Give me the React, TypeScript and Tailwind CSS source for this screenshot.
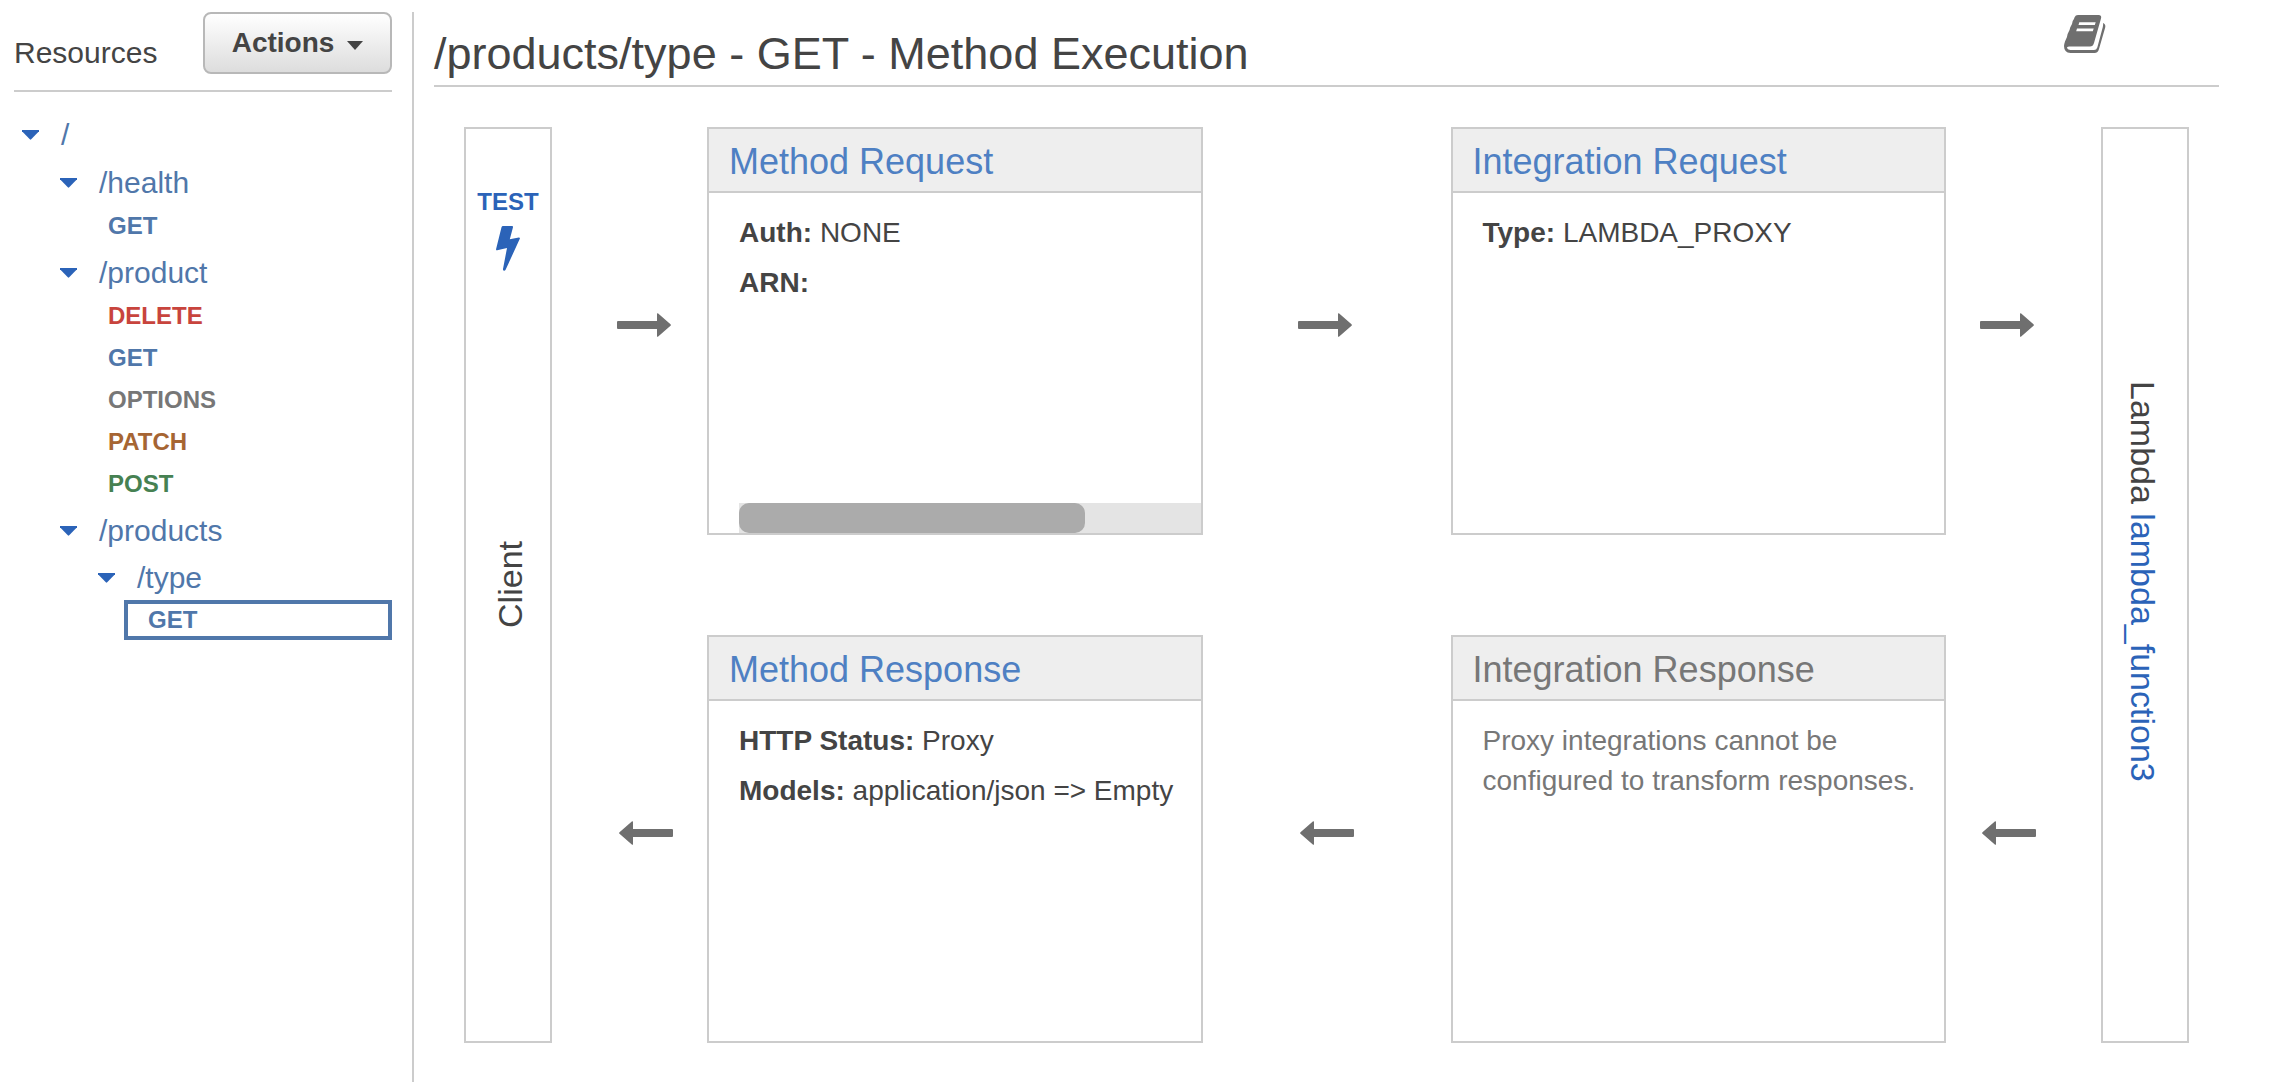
import type { ReactNode } from "react";

function Caret() {
  return (
    <svg viewBox="0 0 17 10" className="h-[10px] w-[17px] shrink-0 fill-[#2b63b8]" aria-hidden="true">
      <path d="M0 0H17V1.2L9.2 9.3Q8.5 10 7.8 9.3L0 1.2Z" />
    </svg>
  );
}

function Resource({ name, children }: { name: string; children?: ReactNode }) {
  return (
    <li>
      <button type="button" className="flex h-[45px] items-center gap-[22px] text-[30px] leading-none text-[#5077aa]">
        <Caret />
        {name}
      </button>
      {children}
    </li>
  );
}

function Methods({ children }: { children: ReactNode }) {
  return <ul className="pl-12">{children}</ul>;
}

function Method({ name, color }: { name: string; color: string }) {
  return (
    <li>
      <a href="#" className={`flex h-[42px] items-center text-2xl leading-none font-bold ${color}`}>
        {name}
      </a>
    </li>
  );
}

function Sidebar() {
  return (
    <aside className="w-[414px] shrink-0 border-r-2 border-[#ccc] pr-5 pl-[14px]">
      <header className="flex h-20 items-start justify-between border-b-2 border-[#ccc]">
        <h2 className="pt-[22px] text-[30px] leading-[38px]">Resources</h2>
        <button
          type="button"
          className="flex h-[62px] w-[189px] items-center justify-center gap-[13px] rounded-lg border-2 border-[#b8b8b8] bg-linear-to-b from-white to-[#dddddd] text-[28px] font-bold"
        >
          Actions
          <svg viewBox="0 0 16 9" className="mt-1 h-[9px] w-4 fill-[#444]" aria-hidden="true">
            <path d="M0 0H16L8 9Z" />
          </svg>
        </button>
      </header>
      <nav aria-label="Resources" className="pt-5 pl-2">
        <ul>
          <Resource name="/">
            <ul className="flex flex-col gap-[3px] pt-[3px] pl-[38px]">
              <Resource name="/health">
                <Methods>
                  <Method name="GET" color="text-[#5077aa]" />
                </Methods>
              </Resource>
              <Resource name="/product">
                <Methods>
                  <Method name="DELETE" color="text-[#c8443d]" />
                  <Method name="GET" color="text-[#5077aa]" />
                  <Method name="OPTIONS" color="text-[#777777]" />
                  <Method name="PATCH" color="text-[#a66533]" />
                  <Method name="POST" color="text-[#468152]" />
                </Methods>
              </Resource>
              <Resource name="/products">
                <ul className="pt-[2px] pl-[38px]">
                  <Resource name="/type">
                    <ul className="pl-[26px]">
                      <li>
                        <a
                          href="#"
                          aria-current="page"
                          className="flex h-10 items-center border-4 border-[#5077aa] pl-5 text-2xl leading-none font-bold text-[#5077aa]"
                        >
                          GET
                        </a>
                      </li>
                    </ul>
                  </Resource>
                </ul>
              </Resource>
            </ul>
          </Resource>
        </ul>
      </nav>
    </aside>
  );
}

function Arrow({ left = false, align }: { left?: boolean; align: string }) {
  return (
    <div className={`flex items-center pb-3 ${align}`}>
      <svg
        viewBox="0 0 54 24"
        className={left ? "h-6 w-[54px] rotate-180 fill-[#6f6f6f]" : "h-6 w-[54px] fill-[#6f6f6f]"}
        aria-hidden="true"
      >
        <path d="M1 8H40V1Q40 -.5 41.200 .6L53.500 11.200Q54.300 12 53.500 12.800L41.200 23.400Q40 24.500 40 23V16H1Q0 16 0 15V9Q0 8 1 8Z" />
      </svg>
    </div>
  );
}

function BookIcon() {
  return (
    <svg viewBox="0 0 42 38" className="h-[38px] w-[42px]" aria-hidden="true">
      <path
        fill="#6f6f6f"
        fillRule="evenodd"
        d="M14 0H34.500Q38 0 37 3.500L30 28Q29 31.500 26 31.500H5Q2.500 31.500 3.200 33.200Q4 35 6.500 35H30Q32.500 35 33.300 32.500L38.800 12Q39.400 9.500 39 8Q42 9 41.200 12.500L35 34Q34 38 30.500 38H6.500Q0 37.500 0 31Q.3 28.500 1 26.500Q3.500 22 3.600 19Q6 15 6.200 12.500Q8.500 9 8.700 6Q10 4.500 10.600 2.200Q11.500 0 14 0ZM15.300 7.200L14.500 10H30.800L31.700 7.200ZM13 13.500L12.200 16.300H28.800L29.700 13.500Z"
      />
    </svg>
  );
}

function Card({ title, muted = false, children }: { title: string; muted?: boolean; children: ReactNode }) {
  return (
    <section className="flex min-w-0 flex-col border-2 border-[#ccc]">
      <h2 className="border-b-2 border-[#ccc] bg-[#eeeeee] pt-[3px] pl-5 text-[36px] leading-[59px]">
        {muted ? (
          <span className="text-[#777777]">{title}</span>
        ) : (
          <a href="#" className="text-[#4e80c3]">
            {title}
          </a>
        )}
      </h2>
      <div className="flex grow flex-col pt-5 pl-[30px] text-[28px] leading-10">{children}</div>
    </section>
  );
}

function Field({ label, value }: { label: string; value?: string }) {
  return (
    <p className="pb-[10px] whitespace-nowrap">
      <b>{label}:</b> {value}
    </p>
  );
}

export default function App() {
  return (
    <div className="flex min-h-screen bg-white pt-3 font-['Liberation_Sans',Arial,sans-serif] text-[#444444]">
      <Sidebar />
      <main className="min-w-0 grow pr-[57px] pl-5">
        <header className="flex h-[75px] items-start justify-between border-b-2 border-[#ccc]">
          <h1 className="pt-4 text-[45px] leading-[52px] whitespace-nowrap">/products/type - GET - Method Execution</h1>
          <button type="button" aria-label="Documentation" className="mt-[3px] mr-[113px]">
            <BookIcon />
          </button>
        </header>
        <div className="grid grid-cols-[88px_155px_minmax(0,1fr)_248px_minmax(0,1fr)_155px_88px] grid-rows-[minmax(408px,auto)_minmax(408px,auto)] gap-y-[100px] px-[30px] pt-10">
          <section className="row-span-2 flex flex-col items-center border-2 border-[#ccc] pt-[58px]">
            <button type="button" className="flex flex-col items-center gap-[9px] text-2xl leading-[30px] font-bold text-[#2b63b8]">
              TEST
              <svg viewBox="0 0 24 45" className="h-[45px] w-6 fill-current" aria-hidden="true">
                <path d="M7 0H16Q17.300 0 17 1.200L13.800 13.300L22.800 11.400Q24.300 11.300 23.800 12.800L9.600 43.800Q8.800 45 7.600 44.600Q6.800 44.200 7 43L11 22L1.200 24.300Q-.2 24.500 .1 23L5.500 1.200Q5.900 0 7 0Z" />
              </svg>
            </button>
            <p className="mt-[270px] pr-1 rotate-180 text-[34px] leading-10 [writing-mode:vertical-rl]">Client</p>
          </section>
          <Arrow align="justify-end pr-9" />
          <Card title="Method Request">
            <Field label="Auth" value="NONE" />
            <Field label="ARN" />
            <div className="mt-auto h-[30px] bg-[#e4e4e4]">
              <div className="h-full w-3/4 rounded-[10px] bg-[#ababab]" />
            </div>
          </Card>
          <Arrow align="justify-center pr-1" />
          <Card title="Integration Request">
            <Field label="Type" value="LAMBDA_PROXY" />
          </Card>
          <Arrow align="justify-start pl-[34px]" />
          <section className="row-span-2 flex items-center justify-center border-2 border-[#ccc] pr-1 pb-2">
            <p className="text-[34px] leading-10 [writing-mode:vertical-rl]">
              Lambda{" "}
              <a href="#" className="text-[#2b63b8]">
                lambda_function3
              </a>
            </p>
          </section>
          <Arrow left align="justify-end pr-[34px]" />
          <Card title="Method Response">
            <Field label="HTTP Status" value="Proxy" />
            <Field label="Models" value="application/json => Empty" />
          </Card>
          <Arrow left align="justify-center" />
          <Card title="Integration Response" muted>
            <p className="pr-3 text-[#777777]">Proxy integrations cannot be configured to transform responses.</p>
          </Card>
          <Arrow left align="justify-start pl-9" />
        </div>
      </main>
    </div>
  );
}
